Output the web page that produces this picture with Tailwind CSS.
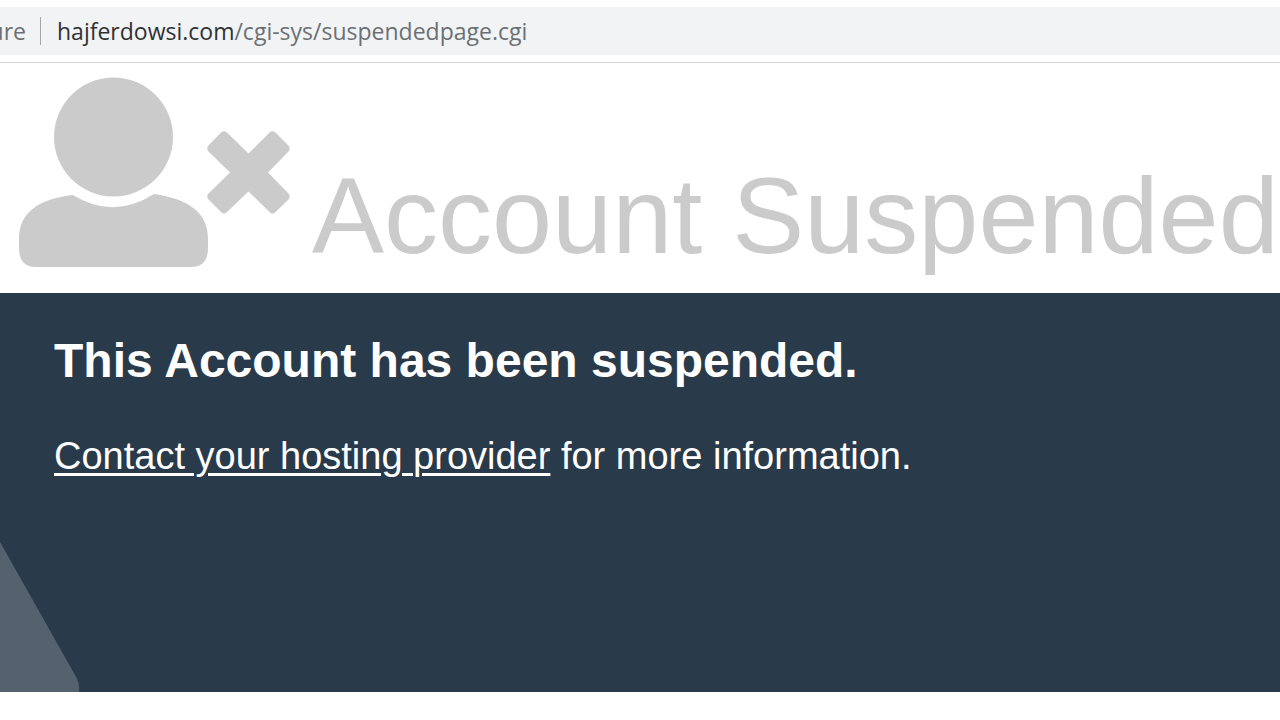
<!DOCTYPE html>
<html lang="en">
<head>
<meta charset="utf-8">
<title>Account Suspended</title>
<script src="https://cdn.jsdelivr.net/npm/@tailwindcss/browser@4"></script>
</head>
<body class="bg-white font-['Liberation_Sans',Arial,sans-serif] overflow-x-hidden">
  <div class="border-b border-[#d5d3d3] py-[7px]">
    <div class="flex h-12 items-center overflow-hidden whitespace-nowrap bg-[#f1f3f5] text-[23px] text-[#6c7074] font-['Open_Sans',sans-serif]">
      <div class="flex w-[26px] shrink-0 justify-end"><span>ure</span></div>
      <div class="ml-3.5 mr-4 h-7 w-px shrink-0 bg-[#a4a7aa]"></div>
      <div><span class="text-[#303236]">hajferdowsi.com</span>/cgi-sys/suspendedpage.cgi</div>
    </div>
  </div>

  <header class="flex h-[230px] items-start whitespace-nowrap pl-[18px] pt-3.5 text-[#cbcbcb]">
    <svg class="h-[192px] w-[274px] shrink-0" viewBox="18 77 274 192" fill="currentColor" aria-hidden="true">
      <circle cx="113.500" cy="137" r="59.500"/>
      <path d="M73 195 Q113 220 154 194 C188 199 208 212 208 239 V248 Q208 267 191 267 H36 Q19 267 19 248 V239 C19 212 39 199 73 195Z"/>
      <path d="M221 132.500 Q224 130 227 132.500 L248.500 153.500 L269.500 132.500 Q272.500 130 275.500 132.500 L288.500 145.500 Q291 148.500 288.500 151.500 L268 172.500 L288.500 193.500 Q291 196.500 288.500 199.500 L275.500 212 Q272.500 215 269.500 212 L248.500 191.500 L227 212 Q224 215 221 212 L208.500 199.500 Q206 196.500 208.500 193.500 L230 172.500 L208.500 151.500 Q206 148.500 208.500 145.500Z"/>
    </svg>
    <h1 class="ml-5 mt-[79px] text-[108px] leading-[120px]">Account Suspended</h1>
  </header>

  <main class="relative h-[399px] overflow-hidden bg-[#293a4a] px-[54px] pt-10 text-white">
    <svg class="absolute bottom-0 left-0 h-[150px] w-20" viewBox="0 0 80 150" fill="#54616e" aria-hidden="true">
      <path d="M0 0 L75 133 Q80 141 79 150 H0Z"/>
    </svg>
    <h2 class="relative text-[48px] font-bold leading-[56px]">This Account has been suspended.</h2>
    <p class="relative mt-[43px] text-[38px] leading-[48px]"><a href="#" class="underline decoration-[3px] underline-offset-4">Contact your hosting provider</a> for more information.</p>
  </main>
</body>
</html>
